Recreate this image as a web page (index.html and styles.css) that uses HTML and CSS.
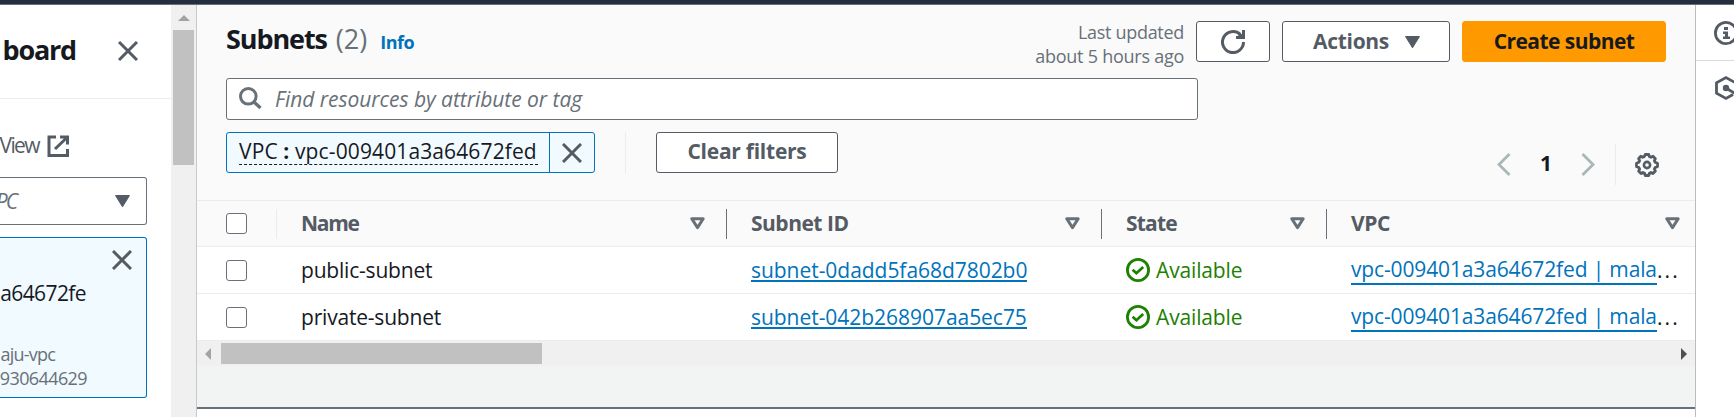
FILE: index.html
```html
<!DOCTYPE html>
<html lang="en">
<head>
<meta charset="utf-8">
<title>Subnets</title>
<link rel="stylesheet" href="styles.css">
</head>
<body>
<svg class="defs" aria-hidden="true">
  <symbol id="x" viewBox="0 0 20 20"><path d="M1 1l18 18M19 1L1 19" fill="none" stroke="#545b64" stroke-width="3"/></symbol>
  <symbol id="sort" viewBox="0 0 15 13"><path d="M1.8 1.8h11.4L7.5 10.6z" fill="none" stroke="#687078" stroke-width="3" stroke-linejoin="round"/></symbol>
  <symbol id="caret" viewBox="0 0 15 12"><path d="M.5.5h14L7.5 11.8z" fill="#545b64" stroke="#545b64" stroke-linejoin="round"/></symbol>
  <symbol id="ok" viewBox="0 0 24 24"><g fill="none" stroke="#1d8102" stroke-width="2.8"><circle cx="12" cy="12" r="10.6"/><path d="M6.6 11.7l3.8 3.5 6.8-6.2"/></g></symbol>
</svg>
<div class="topbar"></div>
<div class="app">
  <aside class="sidebar">
    <div class="side-head"><h2>board</h2><svg class="x"><use href="#x"/></svg></div>
    <div class="side-view"><span>View</span>
      <svg class="ext" viewBox="0 0 22 22"><path d="M9 2H2v18.500h18.500V14M13 2h7.500v7.500M20 2.500L8 14" fill="none" stroke="#545b64" stroke-width="3"/></svg>
    </div>
    <div class="select"><i>PC</i><svg class="caret"><use href="#caret"/></svg></div>
    <div class="vpc-card">
      <svg class="x"><use href="#x"/></svg>
      <div class="vpc-id">a64672fe</div>
      <div class="vpc-name">aju-vpc</div>
      <div class="vpc-owner">930644629</div>
    </div>
  </aside>
  <div class="vscroll"><svg class="up" viewBox="0 0 12 6"><path d="M6 0l6 6H0z" fill="#a3a3a3"/></svg><div class="vthumb"></div></div>
  <main class="main">
    <section class="tools">
      <div class="title-row">
        <h1>Subnets</h1><span class="count">(2)</span><a class="info">Info</a>
        <div class="updated"><div class="u1">Last updated</div><div class="u2">about 5 hours ago</div></div>
        <button class="btn refresh"><svg viewBox="0 0 24 24"><g fill="none" stroke="#545b64" stroke-width="3"><path d="M22.500 12A10.500 10.500 0 1 1 19.200 4.400"/><path d="M22.500 0v7.500H15"/><path d="M18 4l4 3.500"/></g></svg></button>
        <button class="btn actions"><span>Actions</span><svg class="caret"><use href="#caret"/></svg></button>
        <button class="btn create">Create subnet</button>
      </div>
      <div class="search"><svg viewBox="0 0 23 23"><g fill="none" stroke="#687078" stroke-width="3"><circle cx="9.300" cy="9.300" r="7.800"/><path d="M14.700 14.700l6.800 6.300" stroke-width="3.400"/></g></svg><i>Find resources by attribute or tag</i></div>
      <div class="filters">
        <div class="token"><div class="token-text"><span>VPC <b>:</b> vpc-009401a3a64672fed</span></div><div class="token-x"><svg class="x"><use href="#x"/></svg></div></div>
        <div class="divider"></div>
        <button class="btn clear">Clear filters</button>
        <div class="pager">
          <svg class="arrow" viewBox="0 0 14 23"><path d="M12.500 1L2 11.500 12.500 22" fill="none" stroke="#aab7b8" stroke-width="2.800"/></svg>
          <b>1</b>
          <svg class="arrow" viewBox="0 0 14 23"><path d="M1.500 1L12 11.500 1.500 22" fill="none" stroke="#aab7b8" stroke-width="2.800"/></svg>
          <div class="divider"></div>
          <svg class="gear" viewBox="0 0 24 24"><g fill="none" stroke="#545b64"><circle cx="12" cy="12" r="3.100" stroke-width="2.600"/><path stroke-width="2.800" stroke-linejoin="round" d="M10.300 1.500h3.400l.7 2.100 1.600.7 2-1 2.400 2.400-1 2 .7 1.600 2.400.9v3.400l-2.400.9-.7 1.600 1 2-2.400 2.400-2-1-1.600.7-.7 2.300h-3.400l-.7-2.300-1.600-.7-2 1-2.400-2.400 1-2-.7-1.600-2.400-.9v-3.400l2.400-.9.7-1.600-1-2L5.600 3.300l2 1 1.600-.7z"/></g></svg>
        </div>
      </div>
    </section>
    <div class="row head">
      <div class="check"><span class="box"></span></div>
      <div class="cell"><span class="h-name">Name</span><svg class="sort"><use href="#sort"/></svg></div>
      <div class="cell"><span class="h-id">Subnet ID</span><svg class="sort"><use href="#sort"/></svg></div>
      <div class="cell"><span class="h-state">State</span><svg class="sort"><use href="#sort"/></svg></div>
      <div class="cell last"><span class="h-vpc">VPC</span><svg class="sort"><use href="#sort"/></svg></div>
    </div>
    <div class="row">
      <div class="check"><span class="box"></span></div>
      <div class="cell name">public-subnet</div>
      <div class="cell"><a class="id">subnet-0dadd5fa68d7802b0</a></div>
      <div class="cell state"><svg><use href="#ok"/></svg>Available</div>
      <div class="cell last"><a class="vpc">vpc-009401a3a64672fed | mala</a><span class="dots">...</span></div>
    </div>
    <div class="row">
      <div class="check"><span class="box"></span></div>
      <div class="cell name">private-subnet</div>
      <div class="cell"><a class="id">subnet-042b268907aa5ec75</a></div>
      <div class="cell state"><svg><use href="#ok"/></svg>Available</div>
      <div class="cell last"><a class="vpc">vpc-009401a3a64672fed | mala</a><span class="dots">...</span></div>
    </div>
    <div class="hscroll"><svg viewBox="0 0 6 12"><path d="M6 0v12L0 6z" fill="#a3a3a3"/></svg><div class="hthumb"></div><svg class="right" viewBox="0 0 6 12"><path d="M0 0v12l6-6z" fill="#505050"/></svg></div>
    <div class="gap"></div>
    <div class="panel"></div>
  </main>
  <aside class="rail">
    <div class="rail-item"><svg viewBox="0 0 24 24"><circle cx="12" cy="12" r="10.600" fill="none" stroke="#545b64" stroke-width="2.800"/><path d="M10 6h4v3h-4zM9 10.500h5v5h2V18H9v-2.500h2V13H9z" fill="#545b64"/></svg></div>
    <div class="rail-item second"><svg viewBox="0 0 24 24"><path d="M21.500 13V6.800L12 1.600 2.500 6.800v10.400l9.500 5.200 7-3.900" fill="none" stroke="#545b64" stroke-width="2.800"/><circle cx="12" cy="12" r="3.200" fill="#545b64"/><path d="M12 12l9 5.500" stroke="#545b64" stroke-width="2.800"/></svg></div>
  </aside>
</div>
</body>
</html>
```
FILE: styles.css
```css
* { box-sizing: border-box; }
body { margin: 0; height: 417px; overflow: hidden; background: #fff; color: #16191f; font: 21px/30px "Open Sans", "Noto Sans", sans-serif; }
h1, h2 { margin: 0; font-size: 27px; line-height: 36px; font-weight: 700; }
svg { display: block; flex: none; }
.defs { position: absolute; width: 0; height: 0; }
.topbar { height: 5px; background: #232f3e; border-bottom: 1px solid #687078; }
.app { display: flex; height: 412px; }

.x { width: 20px; height: 20px; }
.caret { width: 15px; height: 12px; }

.sidebar { width: 171px; flex: none; overflow: hidden; }
.side-head { height: 94px; display: flex; justify-content: flex-end; align-items: center; gap: 42px; padding: 0 33px 2px 0; border-bottom: 1px solid #eaeded; }
.side-head h2 { letter-spacing: -1.2px; margin-top: -2px; }
.side-view { height: 73px; display: flex; justify-content: flex-end; align-items: center; gap: 8px; padding: 19px 102px 0 0; color: #545b64; white-space: nowrap; }
.side-view span { letter-spacing: -1.6px; }
.ext { width: 22px; height: 22px; margin-top: 2px; }
.select { width: 147px; height: 48px; margin-top: 5px; display: flex; justify-content: flex-end; align-items: center; gap: 98px; padding-right: 16px; border: 1px solid #687078; border-left: 0; border-radius: 0 3px 3px 0; color: #687078; white-space: nowrap; }
.select i { letter-spacing: -2px; padding-right: 2px; }
.select .caret { margin-left: -1px; }
.vpc-card { width: 147px; height: 161px; margin-top: 12px; padding-top: 12px; display: flex; flex-direction: column; align-items: flex-end; background: #f1faff; border: 1px solid #0073bb; border-left: 0; border-radius: 0 3px 3px 0; white-space: nowrap; }
.vpc-card .x { margin-right: 14px; }
.vpc-id { margin: 8px 60px 0 0; letter-spacing: -.6px; }
.vpc-name { margin: 34px 91px 0 0; font-size: 18px; line-height: 24px; letter-spacing: -.8px; color: #687078; }
.vpc-owner { margin-right: 59px; font-size: 18px; line-height: 24px; letter-spacing: -.6px; color: #687078; }

.vscroll { width: 25px; flex: none; display: flex; flex-direction: column; align-items: center; background: #f0f0f0; }
.up { width: 12px; height: 6px; margin-top: 10px; }
.vthumb { width: 21px; height: 135px; margin-top: 9px; background: #c1c1c1; }

.main { width: 1500px; flex: none; border-left: 1px solid #c5caca; border-right: 1px solid #b8bebe; display: flex; flex-direction: column; }
.tools { height: 196px; flex: none; padding: 16px 29px 0; background: #fafafa; border-bottom: 1px solid #eaeded; }
.title-row { display: flex; height: 57px; align-items: flex-start; }
.title-row h1 { letter-spacing: -1.1px; }
.count { margin-left: 9px; font-size: 27px; line-height: 36px; color: #687078; }
.info { margin: 7px 0 0 13px; font-size: 18px; line-height: 28px; font-weight: 700; letter-spacing: -.5px; color: #0073bb; }
.updated { margin: -1px 12px 0 auto; text-align: right; font-size: 18px; line-height: 24px; color: #687078; }
.u1 { letter-spacing: -.3px; }
.u2 { letter-spacing: -.25px; }
.btn { height: 41px; display: flex; align-items: center; justify-content: center; padding: 0 0 2px; font: 700 21px/30px "Open Sans", sans-serif; color: #545b64; background: #fff; border: 1px solid #545b64; border-radius: 3px; }
.refresh { width: 74px; margin-right: 12px; padding: 0; }
.refresh svg { width: 24px; height: 24px; }
.actions { width: 168px; margin-right: 12px; padding-left: 1px; gap: 16px; letter-spacing: -.3px; }
.actions svg { margin-top: 3px; }
.create { width: 204px; color: #16191f; background: #f90; border-color: #f90; letter-spacing: -.55px; }
.search { width: 972px; height: 42px; display: flex; align-items: center; gap: 13px; padding: 0 12px 1px; background: #fff; border: 1px solid #687078; border-radius: 3px; color: #687078; letter-spacing: -.04px; }
.search svg { width: 23px; height: 23px; }
.filters { margin-top: 12px; display: flex; align-items: flex-start; }
.token { width: 369px; height: 41px; display: flex; background: #f1faff; border: 1px solid #0073bb; border-radius: 3px; }
.token-text { width: 323px; padding: 5px 0 0 12px; border-right: 1px solid #0073bb; white-space: nowrap; }
.token-text span { display: block; width: 299px; height: 27px; line-height: 27px; border-bottom: 1px dashed #16191f; letter-spacing: .12px; }
.token-x { flex: 1; display: flex; align-items: center; justify-content: center; }
.divider { width: 1px; height: 41px; background: #eaeded; }
.token + .divider { margin: 0 30px; }
.clear { width: 182px; letter-spacing: -.25px; padding-bottom: 3px; }
.pager { display: flex; align-items: center; margin: 12px 7px 0 auto; }
.pager b { width: 70px; text-align: center; line-height: 26px; padding-bottom: 3px; color: #16191f; }
.arrow { width: 14px; height: 23px; }
.pager .divider { margin: 0 19px 0 20px; }
.gear { width: 24px; height: 24px; }

.row { height: 47px; flex: none; display: grid; grid-template-columns: 80px 450px 375px 225px 1fr; align-items: center; border-bottom: 1px solid #eaeded; background: #fff; }
.row.head { height: 46px; background: #fafafa; color: #545b64; font-weight: 700; }
.check { padding-left: 29px; }
.box { display: block; width: 21px; height: 21px; background: #fff; border: 1px solid #687078; border-radius: 3px; }
.cell { display: flex; align-items: center; padding-left: 24px; line-height: 30px; white-space: nowrap; padding-bottom: 1px; }
.head .check { border-right: 1px solid #eaeded; height: 30px; display: flex; align-items: center; }
.head .cell { height: 30px; border-right: 1px solid #687078; padding-right: 21px; }
.head .cell.last { border: 0; padding-right: 15px; }
.sort { width: 15px; height: 13px; margin-left: auto; }
.h-name { letter-spacing: -1.3px; }
.h-id { letter-spacing: -.5px; }
.h-state { letter-spacing: -.8px; }
.h-vpc { letter-spacing: -.4px; }
.name { letter-spacing: -.2px; }
.id { height: 27px; margin-top: -3px; border-bottom: 2px solid #0073bb; color: #0073bb; letter-spacing: -.04px; }
.vpc { height: 30px; line-height: 29px; color: #0073bb; border-bottom: 2px solid #0073bb; letter-spacing: -.14px; }
.dots { letter-spacing: 2.2px; }
.state { color: #1d8102; letter-spacing: -.15px; gap: 6px; }
.state svg { width: 24px; height: 24px; }

.hscroll { height: 25px; flex: none; display: flex; align-items: center; padding: 0 8px; background: #f0f0f0; }
.hscroll svg { width: 6px; height: 12px; }
.hthumb { width: 321px; height: 21px; margin-left: 10px; background: #c1c1c1; }
.hscroll .right { margin-left: auto; }
.gap { height: 41px; flex: none; background: #f2f3f3; }
.panel { flex: 1; border-top: 2px solid #687078; background: #fff; }

.rail { flex: 1; overflow: hidden; }
.rail-item { height: 56px; padding: 16px 0 0 18px; border-bottom: 1px solid #d5dbdb; }
.rail-item svg { width: 24px; height: 24px; }
.rail-item.second { padding-top: 15px; border: 0; }
```
